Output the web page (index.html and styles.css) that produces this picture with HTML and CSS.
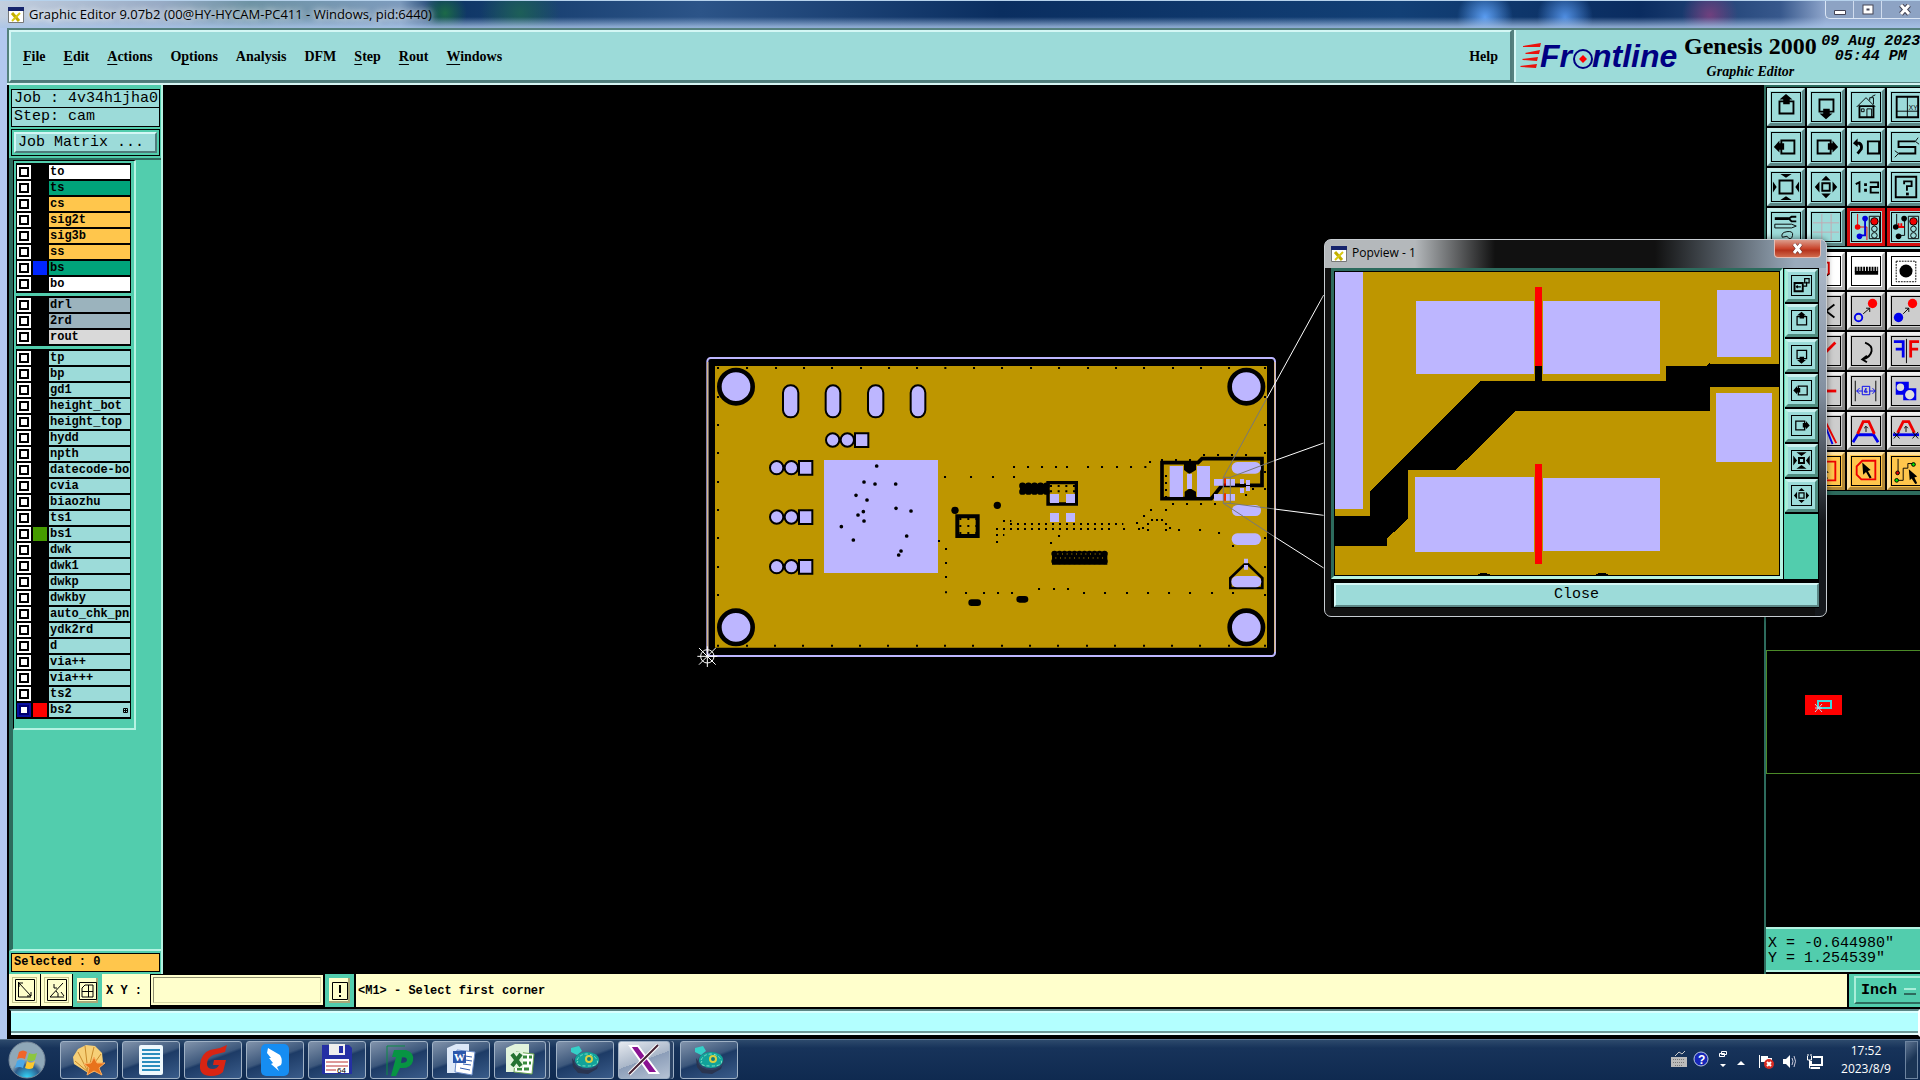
FILE: index.html
```html
<!DOCTYPE html>
<html lang="en">
<head>
<meta charset="utf-8">
<title>Graphic Editor</title>
<link rel="stylesheet" href="styles.css">
</head>
<body>
<svg class="defs" aria-hidden="true">
  <symbol id="x-app" viewBox="0 0 16 16"><path fill="#fff" stroke="#777" d="M.5.5h15v15H.5z"/><path fill="#16246c" d="M0 0h16v4H0z"/><path fill="none" stroke="#c3ae00" stroke-width="3" d="M4 6l7 8"/><path fill="none" stroke="#d8c810" stroke-width="2" d="M12 6l-8 8"/></symbol>
  <symbol id="up" viewBox="0 0 30 30"><path fill="none" stroke="#000" stroke-width="2" d="M8 9h15v13H8z"/><path d="M15 1l7 6h-3v5h-7V7H8z"/></symbol>
  <symbol id="down" viewBox="0 0 30 30"><path fill="none" stroke="#000" stroke-width="2" d="M8 7h15v13H8z"/><path d="M12 17h7v5h3l-7 6-7-6h4z"/></symbol>
  <symbol id="left" viewBox="0 0 30 30"><path fill="none" stroke="#000" stroke-width="2" d="M10 8h14v14H10z"/><path d="M2 15l6-7v3h5v7H8v3z"/></symbol>
  <symbol id="right" viewBox="0 0 30 30"><path fill="none" stroke="#000" stroke-width="2" d="M6 8h14v14H6z"/><path d="M28 15l-6-7v3h-5v7h5v3z"/></symbol>
  <symbol id="home" viewBox="0 0 30 30"><path fill="none" stroke="#000" d="M5 15L15 5l10 10M19 8V5h4v7M21 4l4-2"/><path fill="none" stroke="#000" stroke-width="2" d="M8 14h15v12H8z"/><path fill="none" stroke="#000" d="M10 17h3v3h-3zM16 26v-9h5v9"/></symbol>
  <symbol id="xy" viewBox="0 0 30 30"><path fill="none" stroke="#000" stroke-width="2" d="M5 4h23v22H5z"/><path fill="none" stroke="#000" d="M16.500 4v22M5 19.500h23"/><text x="18" y="18" font-size="7" font-family="Liberation Sans">XY</text></symbol>
  <symbol id="prev" viewBox="0 0 30 30"><path fill="none" stroke="#000" stroke-width="2" d="M17 9h12v13H17z"/><path fill="none" stroke="#000" stroke-width="3" d="M5 11h3q3 2 2 6l-4 5"/><path d="M1 11l5-5v9z"/></symbol>
  <symbol id="snake" viewBox="0 0 30 30"><path fill="none" stroke="#000" stroke-width="2" d="M25 9H7v6h18v7H7"/><path fill="none" stroke="#000" d="M25 9l3-4m-3 4l4 3M7 22l-4-3m4 3l-4 4"/></symbol>
  <symbol id="out" viewBox="0 0 30 30"><path fill="none" stroke="#000" stroke-width="2" d="M8 8h14v14H8z"/><path d="M15 5l-6-4h12zM15 25l-6 4h12zM5 15L1 9v12zM25 15l4-6v12z"/></symbol>
  <symbol id="shrink" viewBox="0 0 30 30"><path fill="none" stroke="#000" stroke-width="3" d="M11 11h8v8h-8z"/><path d="M15 8L7 2h16zM15 22l-8 6h16zM8 15L2 7v16zM22 15l6-8v16z"/></symbol>
  <symbol id="in" viewBox="0 0 30 30"><path fill="none" stroke="#000" stroke-width="2" d="M11 11h8v8h-8z"/><path d="M15 3l-5 5h10zM15 27l-5-5h10zM3 15l5-6v12zM27 15l-5-6v12z"/></symbol>
  <symbol id="ratio" viewBox="0 0 30 30"><path fill="none" stroke="#000" stroke-width="2" d="M4 12l4-2v11M19 10h9v5h-8v6h9"/><path d="M13 11h3v3h-3zM13 17h3v3h-3z"/></symbol>
  <symbol id="help" viewBox="0 0 30 30"><path fill="none" stroke="#000" stroke-width="2" d="M4 4h22v22H4zM13 12V9h8v5h-5v5"/><path d="M15 21h3v3h-3z"/></symbol>
  <symbol id="tools" viewBox="0 0 30 30"><path fill="none" stroke="#000" stroke-width="3" d="M3 6h15"/><path fill="none" stroke="#000" stroke-width="2" d="M26 4l-5 0-3 2 3 3h5"/><path fill="none" stroke="#000" d="M3 12h18l5 2-5 2H3zM11 26q-2-5 5-6t6 4-4 3l-2-2z"/></symbol>
  <symbol id="grid" viewBox="0 0 30 30"><path fill="none" stroke="#c4a9b2" d="M10.500 1v28M20.500 1v28M1 10.500h28M1 20.500h28"/></symbol>
  <symbol id="lights" viewBox="0 0 30 30"><path fill="none" stroke="#e00" d="M6 1v14h10v14"/><path fill="none" stroke="#00d" stroke-width="2" d="M14 6v18H8"/><circle cx="6" cy="15" r="3" fill="#e00"/><circle cx="14" cy="6" r="3" fill="#00d"/><circle cx="8" cy="25" r="3" fill="#00d"/><path fill="none" stroke="#000" d="M18.500 3.500h11v24h-11z"/><circle cx="24" cy="9" r="4" fill="#e00" stroke="#000"/><circle cx="24" cy="17" r="3" fill="none" stroke="#000"/><circle cx="24" cy="24" r="3" fill="none" stroke="#000"/></symbol>
  <symbol id="lights2" viewBox="0 0 30 30"><path fill="none" stroke="#e00" stroke-width="2" d="M4 15h9M7 11v4m3-4v4"/><path fill="none" stroke="#000" d="M5 1v14M13.500 6v18H7"/><circle cx="4" cy="15" r="3"/><circle cx="13" cy="6" r="3"/><circle cx="7" cy="25" r="3"/><path fill="none" stroke="#000" d="M17.500 3.500h11v24h-11z"/><circle cx="23" cy="9" r="4" fill="#e00" stroke="#000"/><circle cx="23" cy="17" r="3" fill="none" stroke="#000"/><circle cx="23" cy="24" r="3" fill="none" stroke="#000"/></symbol>
  <symbol id="poly" viewBox="0 0 30 30"><path fill="none" stroke="#e00" stroke-width="2" d="M5 6h13v12l-7 4"/><path fill="none" stroke="#000" d="M19 18l-9 7"/></symbol>
  <symbol id="ruler" viewBox="0 0 30 30"><path d="M3 15h25v4H3z"/><path fill="none" stroke="#000" stroke-width="5" stroke-dasharray="2 1" d="M3 13h25"/></symbol>
  <symbol id="pad" viewBox="0 0 30 30"><circle cx="15" cy="15" r="7"/><path fill="none" stroke="#000" stroke-dasharray="2 1" d="M4.500 4.500h21v22h-21z"/></symbol>
  <symbol id="cross" viewBox="0 0 30 30"><path fill="none" stroke="#000" stroke-width="2" d="M24 8l-9 7 9 7"/></symbol>
  <symbol id="copy" viewBox="0 0 30 30"><circle cx="22" cy="7" r="5" fill="red"/><circle cx="7" cy="22" r="4" fill="none" stroke="#00e" stroke-width="2"/><path fill="none" stroke="#000" d="M12 18l7-6m-4 0h4v4"/></symbol>
  <symbol id="move" viewBox="0 0 30 30"><circle cx="22" cy="7" r="5" fill="red"/><circle cx="7" cy="22" r="5" fill="#00e"/><path fill="none" stroke="#000" d="M12 18l6-6m-4 0h4v4"/></symbol>
  <symbol id="slash" viewBox="0 0 30 30"><path fill="none" stroke="#e00" stroke-width="3" d="M25 6L12 19"/></symbol>
  <symbol id="rotate" viewBox="0 0 30 30"><path fill="none" stroke="#000" stroke-width="2" d="M14 6q8 3 7 9t-9 9m4-4l-5 4 5 3"/></symbol>
  <symbol id="mirror" viewBox="0 0 30 30"><path fill="none" stroke="#00e" stroke-width="3" d="M2 5h10v17M4 13h8"/><path fill="none" stroke="#e00" stroke-width="3" d="M29 5h-9v17M20 13h8"/><path stroke="#000" d="M15.500 2v26"/></symbol>
  <symbol id="dash" viewBox="0 0 30 30"><path stroke="#e00" stroke-width="3" d="M8 15h18"/></symbol>
  <symbol id="stretch" viewBox="0 0 30 30"><path fill="none" stroke="#000" d="M3.500 4v22M25.500 4v22"/><path fill="none" stroke="#00e" d="M11 10h8v9h-8zM5 15h6m8 0h6M8 12l-3 3 3 3m14-6l3 3-3 3M17 16h-4l2-4v5"/></symbol>
  <symbol id="blocks" viewBox="0 0 30 30"><path fill="#00e" d="M4 5h14v7h8v13H12v-6H4z"/><circle cx="9" cy="11" r="4" fill="#ddd"/><circle cx="19" cy="19" r="5" fill="#ddd"/></symbol>
  <symbol id="leg" viewBox="0 0 30 30"><path fill="none" stroke="#e00" stroke-width="2" d="M14 4l12 24"/><path fill="none" stroke="#00e" stroke-width="2" d="M12 4l10 25"/></symbol>
  <symbol id="arch" viewBox="0 0 30 30"><path fill="none" stroke="#00e" stroke-width="3" d="M1 27l5-8h17l5 8"/><path fill="none" stroke="#e00" stroke-width="3" d="M6 18l6-13h6l6 13"/><path fill="none" stroke="#000" d="M15 16v-6m-2 2l2-2 2 2"/></symbol>
  <symbol id="arch2" viewBox="0 0 30 30"><path stroke="#00e" stroke-width="3" d="M1 19h28"/><path fill="none" stroke="#e00" stroke-width="3" d="M6 17l6-12h6l6 12"/><path fill="none" stroke="#000" d="M15 16v-6m-2 2l2-2 2 2M2 16l6 7m0-7l-6 7M22 16l6 7m0-7l-6 7"/></symbol>
  <symbol id="boxsel" viewBox="0 0 30 30"><path fill="none" stroke="#e00" stroke-width="2" d="M5 5h20v20H5z"/><path d="M10 8l8 9h-4l3 6-2 1-3-6-2 3z"/></symbol>
  <symbol id="polysel" viewBox="0 0 30 30"><path fill="none" stroke="#e00" stroke-width="2" d="M11 4h14v20H10l-5-5V10z"/><path d="M11 6l9 8-3 1 4 7-2 1-4-7-3 3z"/></symbol>
  <symbol id="netsel" viewBox="0 0 30 30"><path fill="none" stroke="#000" d="M6.500 2v15M6 25h6V12h5V7h5"/><circle cx="6" cy="17" r="2" fill="#d00" stroke="#000"/><circle cx="5" cy="25" r="2" fill="#0d0" stroke="#000"/><circle cx="23" cy="8" r="2" fill="#0d0" stroke="#000"/><path d="M18 13l9 8-3 1 3 6-2 1-4-6-2 2z"/></symbol>
  <symbol id="popout" viewBox="0 0 30 30"><path fill="none" stroke="#000" stroke-width="3" d="M4 11h13v13H4z"/><path fill="none" stroke="#000" stroke-width="2" d="M20 4h7v7h-7zM17 16h6V9M7 17h7m-5-2l-2 2 2 2"/></symbol>
  <symbol id="spool" viewBox="0 0 32 32"><path fill="#2a3550" d="M3 14l6 9 10 3 9-4 3-6-3 9-9 5-10-1-5-6z"/><ellipse cx="18" cy="17" rx="13" ry="9" fill="#2f4468"/><ellipse cx="18" cy="16" rx="12" ry="8" fill="#12a39a"/><path fill="none" stroke="#7fe0c8" stroke-dasharray="3 2" d="M8 16q3-6 10-6t10 6-10 6-9-5"/><circle cx="20" cy="15" r="3" fill="#0c7c80" stroke="#d9d040" stroke-width="2"/><path fill="#35d0c8" d="M2 4l8-2 3 5-5 4-6-3z"/></symbol>
</svg>

<header class="titlebar">
  <svg class="app-icon"><use href="#x-app"/></svg>
  <h1>Graphic Editor 9.07b2 (00@HY-HYCAM-PC411 - Windows, pid:6440)</h1>
  <div class="winctl">
    <button aria-label="Minimize"><svg width="12" height="12"><path fill="#fff" stroke="#445" d="M.5 6.500h11v4H.5z"/></svg></button>
    <button aria-label="Restore"><svg width="12" height="12"><path fill="none" stroke="#445" stroke-width="5" d="M3 3h6v5H3z"/><path fill="none" stroke="#fff" stroke-width="3" d="M3 3h6v5H3z"/></svg></button>
    <button aria-label="Close"><svg width="12" height="12"><path stroke="#445" stroke-width="5" d="M2 1l8 9M10 1l-8 9"/><path stroke="#fff" stroke-width="3" d="M2 1l8 9M10 1l-8 9"/></svg></button>
  </div>
</header>

<div class="window">
  <div class="top">
    <nav class="menubar">
      <a href="#"><u>F</u>ile</a><a href="#"><u>E</u>dit</a><a href="#"><u>A</u>ctions</a><a href="#">O<u>p</u>tions</a><a href="#">Analysis</a><a href="#">DFM</a><a href="#"><u>S</u>tep</a><a href="#"><u>R</u>out</a><a href="#"><u>W</u>indows</a>
      <a class="help" href="#">Help</a>
    </nav>
    <div class="brand">
      <svg class="logo" width="162" height="32" role="img" aria-label="Frontline">
        <path fill="#e8120c" d="M3 4l18-3-1 4-17 0zM5 11l15-3-1 4-13 0zM2 17l16-2-1 4-14-1zM0 24l17-2-1 4-15-1z"/>
        <g fill="#000082" font-family="Liberation Sans" font-weight="bold" font-style="italic"><text x="20" y="25" font-size="32">Fr</text><text x="72" y="25" font-size="32">ntline</text></g>
        <circle cx="63" cy="17" r="9" fill="#9cdbd9" stroke="#000082" stroke-width="2"/><path fill="#f00" d="M63 13l4 4-4 4-4-4z"/>
      </svg>
      <div class="product"><strong>Genesis 2000</strong><em>Graphic Editor</em></div>
      <div class="date">09 Aug 2023<br>05:44 PM</div>
    </div>
  </div>

  <div class="main">
    <aside class="side">
      <div class="job">
        <p>Job : 4v34h1jha0</p>
        <p>Step: cam</p>
        <div class="matrix"><button>Job Matrix ...</button></div>
      </div>
      <div class="well">
        <div class="layers">
          <div class="group">
            <label><input type="checkbox"><i></i><span class="white">to</span></label>
            <label><input type="checkbox"><i></i><span class="green">ts</span></label>
            <label><input type="checkbox"><i></i><span class="amber">cs</span></label>
            <label><input type="checkbox"><i></i><span class="amber">sig2t</span></label>
            <label><input type="checkbox"><i></i><span class="amber">sig3b</span></label>
            <label><input type="checkbox"><i></i><span class="amber">ss</span></label>
            <label><input type="checkbox"><i class="c-blue"></i><span class="green">bs</span></label>
            <label><input type="checkbox"><i></i><span class="white">bo</span></label>
          </div>
          <div class="group">
            <label><input type="checkbox"><i></i><span class="slate">drl</span></label>
            <label><input type="checkbox"><i></i><span class="slate">2rd</span></label>
            <label><input type="checkbox"><i></i><span class="grey">rout</span></label>
          </div>
          <div class="group">
            <label><input type="checkbox"><i></i><span>tp</span></label>
            <label><input type="checkbox"><i></i><span>bp</span></label>
            <label><input type="checkbox"><i></i><span>gd1</span></label>
            <label><input type="checkbox"><i></i><span>height_bot</span></label>
            <label><input type="checkbox"><i></i><span>height_top</span></label>
            <label><input type="checkbox"><i></i><span>hydd</span></label>
            <label><input type="checkbox"><i></i><span>npth</span></label>
            <label><input type="checkbox"><i></i><span>datecode-bo</span></label>
            <label><input type="checkbox"><i></i><span>cvia</span></label>
            <label><input type="checkbox"><i></i><span>biaozhu</span></label>
            <label><input type="checkbox"><i></i><span>ts1</span></label>
            <label><input type="checkbox"><i class="c-green"></i><span>bs1</span></label>
            <label><input type="checkbox"><i></i><span>dwk</span></label>
            <label><input type="checkbox"><i></i><span>dwk1</span></label>
            <label><input type="checkbox"><i></i><span>dwkp</span></label>
            <label><input type="checkbox"><i></i><span>dwkby</span></label>
            <label><input type="checkbox"><i></i><span>auto_chk_pnl</span></label>
            <label><input type="checkbox"><i></i><span>ydk2rd</span></label>
            <label><input type="checkbox"><i></i><span>d</span></label>
            <label><input type="checkbox"><i></i><span>via++</span></label>
            <label><input type="checkbox"><i></i><span>via+++</span></label>
            <label><input type="checkbox"><i></i><span>ts2</span></label>
            <label><input type="checkbox" checked><i class="c-red"></i><span class="current">bs2<svg width="5" height="5"><path fill="none" stroke="#000" d="M.5.5h4v4h-4zM2.500 0v5M0 2.500h5"/></svg></span></label>
          </div>
        </div>
      </div>
      <p class="selected">Selected : 0</p>
    </aside>

    <main class="canvas">
      <svg class="art" role="img" aria-label="Circuit board view">
        <g transform="translate(527 255) scale(.333333)">
          <rect x="52" y="54" width="1703" height="894" rx="10" fill="#000" stroke="#bdb6ff" stroke-width="6"/>
          <path fill="none" stroke="#d5b88a" stroke-width="4" d="M53 66v870M1754 66v870"/>
          <path fill="#be9600" d="M75 78h1656v845H75z"/>
          <g fill="#bdb6ff" stroke="#000" stroke-width="14"><circle cx="138" cy="140" r="50"/><circle cx="138" cy="862" r="50"/><circle cx="1669" cy="140" r="50"/><circle cx="1669" cy="862" r="50"/></g>
          <g fill="#bdb6ff" stroke="#000" stroke-width="6">
            <rect x="279" y="136" width="46" height="96" rx="22"/><rect x="407" y="136" width="44" height="96" rx="22"/><rect x="534" y="136" width="46" height="96" rx="22"/><rect x="662" y="136" width="44" height="96" rx="22"/>
            <g id="hdr"><circle cx="428" cy="300" r="20"/><circle cx="472" cy="300" r="20"/><path d="M495 280h40v41h-40z"/></g>
            <use href="#hdr" x="-168" y="83"/><use href="#hdr" x="-168" y="231"/><use href="#hdr" x="-168" y="380"/>
          </g>
          <path fill="#bdb6ff" d="M402 360h342v339H402z"/>
          <path fill="none" stroke="#000" stroke-width="11" stroke-linecap="round" d="M560 378h.1M522 426h.1M555 432h.1M617 432h.1M498 466h.1M531 480h.1M618 505h.1M663 513h.1M520 515h.1M504 525h.1M522 543h.1M454 560h.1M490 600h.1M650 588h.1M633 633h.1M626 645h.1"/>
          <path fill="none" stroke="#000" stroke-width="6" stroke-linecap="square" d="M84 84h.1M171 84h.1M258 84h.1M342 84h.1M426 84h.1M513 84h.1M597 84h.1M681 84h.1M766 84h.1M852 84h.1M936 84h.1M1023 84h.1M1107 84h.1M1194 84h.1M1278 84h.1M1362 84h.1M1449 84h.1M1533 84h.1M1617 84h.1M1725 84h.1M84 917h.1M171 917h.1M255 917h.1M339 917h.1M426 917h.1M510 917h.1M594 917h.1M681 917h.1M765 917h.1M849 917h.1M936 917h.1M1020 917h.1M1104 917h.1M1191 917h.1M1275 917h.1M1362 917h.1M1446 917h.1M1530 917h.1M1617 917h.1M1725 917h.1M84 171h.1M84 255h.1M84 339h.1M84 426h.1M84 510h.1M84 594h.1M84 681h.1M84 765h.1M1725 171h.1M1725 255h.1M1725 339h.1M1725 396h.1M1725 447h.1M1725 594h.1M1725 681h.1M1725 765h.1M765 411h.1M843 411h.1M909 411h.1M972 411h.1M972 381h.1M1014 381h.1M1056 381h.1M1098 381h.1M1131 381h.1M1194 381h.1M1236 381h.1M1281 381h.1M1323 381h.1M1366 381h.1M1380 366h.1M747 603h.1M768 627h.1M768 669h.1M768 711h.1M768 757h.1M828 759h.1M882 759h.1M924 759h.1M966 759h.1M1047 747h.1M1092 747h.1M1134 747h.1M1182 759h.1M1245 759h.1M1311 759h.1M1374 759h.1M1437 759h.1M1500 759h.1M1566 759h.1M1629 759h.1"/>
          <circle cx="795" cy="511" r="11"/><circle cx="922" cy="496" r="11"/>
          <path fill="none" stroke="#000" stroke-width="12" d="M802 529h61v59h-61z"/>
          <path fill="none" stroke="#000" stroke-width="6" stroke-dasharray="6 18" d="M808 537h52M808 558h52M808 579h52"/>
          <g fill="none" stroke="#000" stroke-width="20" stroke-linecap="round"><path d="M845 788h18M989 778h16"/></g>
          <g transform="translate(810 0)">
            <path fill="none" stroke="#000" stroke-width="19" stroke-linecap="round" stroke-dasharray="1 17" d="M187 437h80M187 455h80"/><path d="M180 440h80v14h-80z"/>
            <path fill="none" stroke="#000" stroke-width="10" d="M264 428h85v64h-85z"/><path fill="none" stroke="#000" stroke-width="6" stroke-dasharray="6 17" d="M270 438h76M270 454h76"/>
            <path fill="#bdb6ff" d="M270 462h27v27h-27zM318 462h27v27h-27zM270 519h27v27h-27zM318 519h27v27h-27z"/>
            <path fill="none" stroke="#000" stroke-width="6" stroke-dasharray="6 15" d="M129 543h25M150 552h340M108 567h350M108 585h25"/>
            <path fill="none" stroke="#000" stroke-width="6" stroke-linecap="square" d="M111 606h.1M273 609h.1M297 588h.1M492 567h.1M531 549h.1M552 528h.1M573 510h.1M618 510h.1M537 567h.1M549 564h.1M564 552h.1M564 570h.1M576 540h.1M591 540h.1M606 540h.1M618 552h.1M618 570h.1M630 564h.1M657 570h.1M720 570h.1M777 579h.1M819 618h.1M606 360h.1M648 360h.1M690 360h.1M732 345h.1M774 345h.1M816 345h.1M858 345h.1M618 408h.1M618 429h.1M618 450h.1M618 471h.1M639 492h.1M681 492h.1M723 492h.1M765 492h.1M858 465h.1M879 447h.1"/>
            <path fill="none" stroke="#000" stroke-width="18" stroke-linecap="round" stroke-dasharray="1 14" d="M283 641h160M283 664h160"/><path d="M276 636h166v38H276z"/><path fill="none" stroke="#be9600" stroke-width="3" stroke-dasharray="3 11" d="M286 654h150M292 642h140"/>
            <path fill="none" stroke="#000" stroke-width="11" d="M606 368h108l12-12h180v80H786l-32 40H606z"/>
            <path d="M672 370h36v20l-20 12-16-12zM674 455l16-10 18 10v24h-34z"/>
            <path fill="#bdb6ff" d="M629 378h40v93h-40zM711 378h39v93h-39zM681 401h15v46h-15zM762 417h28v20h-28zM798 417h27v20h-27zM762 462h28v20h-28zM798 462h27v20h-27zM840 417h12v15h-12zM858 420h12v15h-12zM840 444h12v15h-12zM858 438h12v15h-12z"/>
            <path d="M811 744V714l43-41h10l43 41v30z" fill="#be9600" stroke="#000" stroke-width="8"/>
            <g fill="#bdb6ff"><rect x="815" y="366" width="88" height="35" rx="17"/><rect x="816" y="495" width="87" height="33" rx="16"/><rect x="815" y="580" width="88" height="35" rx="17"/><rect x="814" y="708" width="90" height="34" rx="17"/><path d="M852 656h12v14h-12zM852 675h12v14h-12z"/></g>
            <path fill="red" d="M793 415h4v22h-4zM793 460h4v22h-4z"/>
            <g fill="none" stroke="#777" stroke-width="3"><path d="M790 412h21v78h-21zM790 412L921 174M811 412L943 362M811 490l132 17M790 490L943 590"/></g>
            <g fill="none" stroke="#fff" stroke-width="3"><path d="M921 174L1091-135M943 362l148-53M943 507l148 19M943 590l148 94"/></g>
          </g>
          <g fill="none" stroke="#fff" stroke-width="3"><circle cx="52" cy="949" r="20"/><path d="M22 949h60M52 919v62M27 924l50 50M77 924l-50 50"/></g>
        </g>
      </svg>
    </main>

    <aside class="tools">
      <div class="pad teal">
        <button aria-label="Pan up"><svg><use href="#up"/></svg></button><button aria-label="Pan down"><svg><use href="#down"/></svg></button><button aria-label="Home"><svg><use href="#home"/></svg></button><button aria-label="Coordinates"><svg><use href="#xy"/></svg></button>
        <button aria-label="Pan left"><svg><use href="#left"/></svg></button><button aria-label="Pan right"><svg><use href="#right"/></svg></button><button aria-label="Previous view"><svg><use href="#prev"/></svg></button><button aria-label="Serpentine"><svg><use href="#snake"/></svg></button>
        <button aria-label="Zoom in"><svg><use href="#out"/></svg></button><button aria-label="Zoom out"><svg><use href="#in"/></svg></button><button aria-label="Scale"><svg><use href="#ratio"/></svg></button><button aria-label="Query"><svg><use href="#help"/></svg></button>
        <button aria-label="Tools"><svg><use href="#tools"/></svg></button><button aria-label="Grid"><svg><use href="#grid"/></svg></button><button class="red" aria-label="Net check"><svg><use href="#lights"/></svg></button><button class="red" aria-label="Rule check"><svg><use href="#lights2"/></svg></button>
      </div>
      <div class="pad silver">
        <button class="lit" aria-label="Select"><svg></svg></button><button class="lit" aria-label="Polygon"><svg><use href="#poly"/></svg></button><button class="lit" aria-label="Measure"><svg><use href="#ruler"/></svg></button><button class="lit" aria-label="Pad"><svg><use href="#pad"/></svg></button>
        <button aria-label="Add"><svg></svg></button><button aria-label="Delete"><svg><use href="#cross"/></svg></button><button aria-label="Copy"><svg><use href="#copy"/></svg></button><button aria-label="Move"><svg><use href="#move"/></svg></button>
        <button aria-label="Change"><svg></svg></button><button aria-label="Cut"><svg><use href="#slash"/></svg></button><button aria-label="Rotate"><svg><use href="#rotate"/></svg></button><button aria-label="Mirror"><svg><use href="#mirror"/></svg></button>
        <button aria-label="Line"><svg></svg></button><button aria-label="Break"><svg><use href="#dash"/></svg></button><button aria-label="Stretch"><svg><use href="#stretch"/></svg></button><button aria-label="Merge"><svg><use href="#blocks"/></svg></button>
        <button aria-label="Corner"><svg></svg></button><button aria-label="Slope"><svg><use href="#leg"/></svg></button><button aria-label="Shift segment"><svg><use href="#arch"/></svg></button><button aria-label="Trim segment"><svg><use href="#arch2"/></svg></button>
        <button class="gold" aria-label="Pick"><svg></svg></button><button class="gold" aria-label="Box pick"><svg><use href="#boxsel"/></svg></button><button class="gold" aria-label="Polygon pick"><svg><use href="#polysel"/></svg></button><button class="gold" aria-label="Net pick"><svg><use href="#netsel"/></svg></button>
      </div>
      <div class="overview"><svg width="37" height="20"><path fill="red" d="M0 0h37v20H0z"/><path fill="none" stroke="#40d8dc" stroke-width="2" d="M13 6h13v7H13z"/><path fill="none" stroke="#bde" d="M10 9l7 8M17 9l-7 8M10 13h7"/></svg></div>
      <output class="coords">X = -0.644980"<br>Y = 1.254539"</output>
    </aside>
  </div>

  <div class="prompt">
    <button class="snap" aria-label="Snap"><svg width="20" height="22"><path fill="none" stroke="#000" d="M.5.5h19v21H.5zM3.500 3v15H16M4 4l12 13M4 8V4h4M16 13v4h-4"/></svg></button>
    <button class="snap" aria-label="Angle"><svg width="20" height="22"><path fill="none" stroke="#000" d="M.5.5h19v21H.5zM3 18h14M3 18L16 4M7 5v4h3M14 13l3 4M9 12q3 2 2 6"/></svg></button>
    <button class="frame" aria-label="Grid snap"><svg width="18" height="18"><path fill="none" stroke="#000" d="M.5.5h17v17H.5zM3 6l3-3h8v12H3zM9.500 3v12M3 9.500h11"/></svg></button>
    <label class="xy" for="xy-in">X Y :</label><input id="xy-in" type="text">
    <button class="frame" aria-label="Alert"><svg width="16" height="18"><path fill="none" stroke="#000" d="M.5.5h15v17H.5z"/><path d="M7 3h2v8H7zM7 13h2v2H7z"/></svg></button>
    <p>&lt;M1&gt; - Select first corner</p>
    <div class="unit"><select aria-label="Units"><option>Inch</option></select></div>
  </div>
  <div class="message"></div>
</div>

<section class="popview">
  <div class="pop-title"><svg class="app-icon"><use href="#x-app"/></svg><h2>Popview - 1</h2><button aria-label="Close popview"><svg width="12" height="12"><path stroke="#522" stroke-width="4" d="M2 1l7 9M9 1l-7 9"/><path stroke="#fff" stroke-width="3" d="M2 1l7 9M9 1l-7 9"/></svg></button></div>
  <div class="pop-body">
    <div class="pop-main">
      <div class="pop-view"><svg viewBox="38 125 1165 913" preserveAspectRatio="none" shape-rendering="crispEdges" role="img" aria-label="Enlarged view">
        <path fill="#be9600" d="M38 125h1165v913H38z"/>
        <path d="M38 860h92v-73L421 453h141v-47h18v47h327v-45h106l10-11v5h180v69h-181v72H512L355 722H230v146l-55 60v22H38zM410 1038q19-12 37 0zM719 1038q19-14 39 0z"/>
        <path fill="#bdb6ff" d="M38 125h74v714H38zM251 212h309v219H251zM583 212h308v219H583zM1040 180h141v200h-141zM1037 491h147v207h-147zM248 743h312v225H248zM583 746h308v219H583z"/>
        <path fill="red" d="M562 170h18v237h-18zM562 705h18v299h-18z"/>
      </svg></div>
      <div class="pop-tools">
        <button aria-label="Pop out"><svg><use href="#popout"/></svg></button><button aria-label="Up"><svg><use href="#up"/></svg></button><button aria-label="Down"><svg><use href="#down"/></svg></button><button aria-label="Left"><svg><use href="#left"/></svg></button><button aria-label="Right"><svg><use href="#right"/></svg></button><button aria-label="Shrink"><svg><use href="#shrink"/></svg></button><button aria-label="Grow"><svg><use href="#in"/></svg></button>
      </div>
    </div>
    <button class="close">Close</button>
  </div>
</section>

<footer class="taskbar">
  <button class="orb" aria-label="Start"><svg viewBox="0 0 38 38"><defs><radialGradient id="g" cy="1"><stop stop-color="#3df" offset="0"/><stop stop-color="#2c5c8c" offset=".7"/><stop stop-color="#8fa8b8" offset="1"/></radialGradient></defs><circle cx="19" cy="19" r="18" fill="url(#g)" stroke="#789"/><path fill="#f0652a" d="M11 11q4-3 8 0l-2 7q-4-2-8 0z"/><path fill="#8cc63f" d="M21 12q4 2 8 0l-2 7q-4 2-8 0z"/><path fill="#4aa8e8" d="M9 20q4-3 8 0l-2 7q-4-2-8 0z"/><path fill="#fdc82f" d="M19 20q4 3 8 0l-2 7q-4 2-8 0z"/></svg></button>
  <div class="tasks">
    <button aria-label="Shell"><svg viewBox="0 0 32 32"><path fill="#f6cf77" d="M15 29L1 20 0 13l5-8 8-4 9 1 7 7 1 9-9 10z"/><path fill="none" stroke="#c98a2c" d="M15 28L2 17M15 28L5 8M15 28L12 2M15 28L21 3M15 28L28 10"/><path fill="#e8731c" stroke="#fbb060" d="M21 13l3 6 8 0-6 5 3 7-8-4-7 4 2-7-5-4 7-1z"/></svg></button>
    <button aria-label="Notes"><svg viewBox="0 0 32 32"><rect x="4" y="1" width="24" height="30" rx="2" fill="#eef8fd"/><path stroke="#2b8dbd" stroke-width="2" d="M7 6h18M7 10h18M7 14h18M7 18h18M7 22h18M7 26h18"/></svg></button>
    <button aria-label="G app"><svg viewBox="0 0 32 32"><path fill="#d92413" d="M30 1l-2 7-12 3q-6 3-6 9 0 5 6 5 4 0 6-4h-6l1-5h12l-3 12q-4 4-12 4-12 0-11-11Q4 9 13 6l10-2z"/></svg></button>
    <button aria-label="Wing"><svg viewBox="0 0 32 32"><rect x="2" y="0" width="28" height="32" rx="5" fill="#168df2"/><path fill="#fff" d="M9 4l12 7q3 5 1 10l-4 2 2 4-8-7 2-1-4-5 2 0-4-5z"/></svg></button>
    <button aria-label="Save 64"><svg viewBox="0 0 32 32"><path fill="#2530a4" d="M1 1h27l3 3v26H1z"/><path fill="#eee" d="M8 0h16v11H8z"/><path fill="#2530a4" d="M18 2h4v7h-4z"/><path fill="#fff" d="M4 15h24v14H4z"/><path stroke="#b33" stroke-width="1" d="M5 18h22M5 22h22M5 26h10"/><text x="16" y="29" font-size="8" font-family="Liberation Sans">64</text></svg></button>
    <button aria-label="P app"><svg viewBox="0 0 32 32"><path fill="none" stroke="#0a8c45" d="M4 31V2h18"/><path fill="#079443" d="M11 6h12q9 3 7 11-2 8-13 7l-4 8H8l5-19h6l-1 6q6 0 6-3t-5-3H9z"/></svg></button>
    <button aria-label="Word"><svg viewBox="0 0 32 32"><path fill="#dce8f8" d="M2 4l9-4h13v29H2z"/><path fill="#fff" stroke="#6b8cc8" d="M12 6l18 2-3 23-17-3z"/><path stroke="#345eb0" d="M20 12l7 1M20 16l7 1M18 20l8 1M15 24l10 2"/><path fill="#2b57ab" d="M8 7h13v12H8z"/><text x="9" y="17" font-size="11" font-weight="bold" fill="#fff" font-family="Liberation Serif">W</text></svg></button>
    <button class="stack" aria-label="Excel"><svg viewBox="0 0 32 32"><path fill="#e2f4dc" d="M2 4l9-4h14v28H2z"/><path fill="#fff" stroke="#6aa650" d="M12 8l18 2-2 20-18-2z"/><path stroke="#388b3c" stroke-width="3" d="M18 13h10M18 19h9M13 25h13" stroke-dasharray="5 2"/><path fill="#e2f4dc" d="M5 8h14v16H5z"/><path stroke="#257331" stroke-width="4" d="M8 10l9 12M17 10L8 22"/></svg></button>
    <button aria-label="Genesis"><svg><use href="#spool"/></svg></button>
    <button class="stack active" aria-label="X server"><svg viewBox="0 0 32 32"><path fill="#8a1292" stroke="#fff" stroke-width="2" d="M2 2h8l20 27h-9z"/><path fill="none" stroke="#fff" stroke-width="4" d="M30 1L1 30"/><path fill="none" stroke="#423" stroke-width="2" d="M30 1L1 30"/></svg></button>
    <button aria-label="Genesis second"><svg><use href="#spool"/></svg></button>
  </div>
  <div class="tray">
    <svg width="150" height="24" role="img" aria-label="Notification icons">
      <path fill="none" stroke="#ccc" d="M4 8l4-4 3 2 3-3"/><path fill="#bbb" d="M0 9h16v10H0z"/><path stroke="#777" stroke-dasharray="1 1" d="M2 11.500h12M2 14.500h12M4 17.500h8"/>
      <circle cx="30" cy="11" r="7" fill="#1727b8" stroke="#b8c6e0" stroke-width="1"/><text x="27" y="16" font-size="12" font-weight="bold" fill="#fff" font-family="Liberation Sans">?</text>
      <path fill="none" stroke="#fff" d="M50.500 3.500h5v3h-5zM48.500 5.500h5v3h-5z"/><path fill="#fff" d="M49 16h6l-3 3zM66 17l4-4 4 4z"/>
      <path fill="#fff" d="M88 7h1v13h-1zM90 8h7v2h4v6h-4v-2h-7z"/><circle cx="98" cy="16" r="5" fill="#d92b22"/><path stroke="#fff" stroke-width="2" d="M96 14l4 4M100 14l-4 4"/>
      <path fill="#fff" d="M112 11h3l4-4v13l-4-4h-3z"/><path fill="none" stroke="#ccd" d="M121 10q2 3 0 7M123 8q3 5 0 11"/>
      <path fill="none" stroke="#fff" stroke-width="2" d="M142 9h9v8h-11v-4M140 20h9"/><path fill="none" stroke="#fff" d="M136.500 8v4h4V8M138.500 12v8h6M137 6v2m3-2v2"/>
    </svg>
    <time>17:52<br>2023/8/9</time>
    <button class="peek" aria-label="Show desktop"></button>
  </div>
</footer>
</body>
</html>
```
FILE: styles.css
```css
* { box-sizing: border-box; margin: 0; }
:root { --teal: #9cdbd9; --green: #52cdad; --dark: #2d6b5d; --lite: #b5f3e2; --cream: #ffffcc; }
body { display: flex; flex-direction: column; min-height: 100vh; height: 100vh; overflow: hidden; background: #000; color: #000; font: 15px "Liberation Mono", monospace; position: relative; }
button { font: inherit; color: inherit; padding: 0; border: 0; background: none; flex: none; }
svg { display: block; flex: none; }
a { color: inherit; text-decoration: none; }
.defs { width: 0; height: 0; position: absolute; }
.app-icon { width: 16px; height: 16px; }

.titlebar { flex: none; height: 28px; display: flex; align-items: flex-start; gap: 5px; padding-left: 8px; border-top: 1px solid #b6d2ec;
  background: linear-gradient(#0000 16px, #a9c4e8cc 26px), radial-gradient(circle at 1485px 16px, #5a9cf0, #0000 28px), radial-gradient(circle at 1565px 16px, #4f8de0, #0000 28px), radial-gradient(circle at 1710px 14px, #70407e, #0000 28px), radial-gradient(circle at 445px 12px, #1c6a48, #0000 22px), radial-gradient(circle at 520px 12px, #1d5f58, #0000 40px), linear-gradient(90deg, #c3cfdf, #98abc5 160px, #6e93a4 250px, #7d9bbd 400px, #0d3464 440px, #2c5488 700px, #0a2e60 1000px, #124076 1400px, #0a2c60 1640px, #37588c 1780px, #8fa6cc 1826px); }
.app-icon + h1 { flex: 1; }
.titlebar .app-icon { margin-top: 6px; }
h1, h2 { font: 13px/18px "Open Sans", sans-serif; white-space: nowrap; }
h1 { margin-top: 4px; text-shadow: 0 0 6px #fff, 0 0 8px #ffffffaa; }
.winctl { display: flex; height: 18px; border: 1px solid #dbe6f5; border-top: 0; border-right: 0; border-radius: 0 0 0 5px; background: #8da3c4; }
.winctl button { width: 28px; display: grid; place-items: center; border-right: 1px solid #d0dcee; }
.winctl button:last-child { width: 38px; padding-left: 8px; border: 0; }

.window { flex: 1; min-height: 0; display: flex; flex-direction: column; border-left: 7px solid #b2c8f0; background: #000; }
.top { flex: none; height: 57px; display: flex; gap: 2px; padding: 2px 0 1px 2px; background: #55817f; border-bottom: 2px solid #d4f4f2; font-family: "Liberation Serif", serif; overflow: hidden; }
.menubar { flex: 1; display: flex; align-items: center; gap: 18px; padding: 1px 12px 0; background: var(--teal); border: 2px solid; border-color: #d4f7f5 #4f7c7b #4f7c7b #d4f7f5; font-weight: bold; font-size: 14px; }
.menubar u { text-underline-offset: 3px; }
.help { margin-left: auto; }
.brand { width: 406px; display: flex; gap: 2px; padding-left: 4px; background: var(--teal); border-left: 2px solid #d4f7f5; overflow: hidden; }
.logo { margin-top: 12px; overflow: visible; }
.product { width: 136px; display: flex; flex-direction: column; align-items: center; white-space: nowrap; }
.product strong { font-size: 24px; line-height: 32px; }
.product em { font-size: 14px; font-weight: bold; line-height: 20px; }
.date { font: italic bold 15px/15px "Liberation Mono", monospace; width: 104px; flex: none; text-align: center; padding-top: 4px; }

.main { flex: 1; min-height: 0; display: flex; padding-left: 2px; }
.side { width: 154px; flex: none; display: flex; flex-direction: column; background: var(--green); border-right: 2px solid var(--lite); }
.job { padding: 4px 1px 2px 2px; border-bottom: 2px solid var(--dark); }
.job p { height: 19px; line-height: 18px; padding-left: 2px; border: 1px solid #000; background: var(--teal); white-space: nowrap; }
.job p + p { border-top: 0; }
.matrix { margin-top: 2px; padding: 2px; border: 1px solid #000; }
.matrix button, .unit select { display: block; border: 2px solid; border-color: #d4f7f5 #4f7c7b #4f7c7b #d4f7f5; }
.matrix button { width: 100%; height: 21px; text-align: left; padding-left: 2px; background: var(--teal); line-height: 17px; }
.well { flex: 1; border-left: 4px solid var(--dark); border-bottom: 2px solid var(--lite); }
.layers { width: 123px; padding: 2px 3px 9px 2px; border: 1px solid #000; border-right: 2px solid var(--lite); border-bottom: 2px solid var(--lite); display: flex; flex-direction: column; gap: 3px; font: bold 12px/14px "Liberation Mono", monospace; }
.group { background: #000; padding: 1px; }
.group label { display: flex; height: 16px; padding: 1px 0; gap: 2px; }
.group input { appearance: none; margin: 0; width: 14px; height: 14px; border: 2px solid #fff; background: #fff; box-shadow: inset 0 0 0 2px #000; flex: none; }
.group input:checked { border-color: #0a10a0; box-shadow: inset 0 0 0 2px #000070; }
.group i { width: 14px; flex: none; }
.group span { flex: 1; min-width: 0; padding-left: 1px; background: var(--teal); overflow: hidden; white-space: nowrap; }
.group .white { background: #fff; } .group .green { background: #00a47a; } .group .amber { background: #ffc64c; } .group .slate { background: #9bb3bd; } .group .grey { background: #d9d9d9; }
.group .c-blue { background: #0026ff; } .group .c-green { background: #469c00; } .group .c-red { background: red; }
.group .current { display: flex; justify-content: space-between; align-items: center; padding-right: 2px; }
.selected { margin: 2px 1px 2px 2px; padding-left: 2px; height: 19px; border: 1px solid #000; background: #ffc64c; font: bold 12px/17px "Liberation Mono", monospace; }
.canvas { flex: 1; min-width: 0; overflow: hidden; }
.art { width: 100%; height: 100%; overflow: visible; }

.tools { width: 156px; flex: none; display: flex; flex-direction: column; border-left: 2px solid var(--dark); overflow: hidden; }
.pad { display: grid; grid-template-columns: repeat(4, 38px); gap: 2px; padding: 3px 0 0 1px; }
.pad.teal { background: linear-gradient(var(--dark) 2px, #000 2px); border-bottom: 2px solid var(--teal); margin-bottom: 1px; padding-bottom: 1px; }
.pad.silver { padding-top: 2px; padding-bottom: 1px; border-bottom: 4px solid var(--dark); }
.pad button { width: 38px; height: 38px; padding: 1px; border: 3px solid; border-color: #c9f1ef #5c8786 #5c8786 #c9f1ef; background: var(--teal); }
.pad.silver button { background: #cdcdcd; border-color: #eee #888 #888 #eee; }
.pad.silver .lit { background: #fff; border-color: #fff #b0b0b0 #b0b0b0 #fff; }
.pad.silver .gold { background: #ffc64c; border-color: #ffe2a0 #b08838 #b08838 #ffe2a0; }
.pad svg { width: 30px; height: 30px; border: 1px solid #000; }
.pad .red { border-color: #d41010; }
.overview { height: 124px; margin-top: auto; padding: 44px 0 0 38px; border: 1px solid #4b8a28; border-right: 0; margin-bottom: 153px; }
.coords { height: 45px; flex: none; margin-bottom: 2px; padding: 7px 2px 0; border-top: 2px solid var(--lite); border-bottom: 2px solid var(--lite); background: var(--green); line-height: 15px; white-space: nowrap; }

.prompt { flex: none; height: 33px; display: flex; align-items: stretch; margin-left: 2px; background: #000; font: bold 12px/16px "Liberation Mono", monospace; overflow: hidden; }
.prompt > p, .xy { display: flex; align-items: center; background: var(--cream); }
.prompt > p { flex: 1; padding-left: 2px; margin-left: 2px; }
.xy { width: 48px; padding-left: 4px; }
.snap { width: 31px; margin: 0 1px 1px 0; background: var(--cream); display: grid; place-items: center; box-shadow: inset 0 0 0 3px var(--cream), inset 0 0 0 4px #c4c48e; }
.frame { width: 29px; background: var(--cream); display: grid; place-items: center; border: 4px solid var(--green); box-shadow: inset -2px -2px #a8a878; }
.prompt input { width: 170px; border: 2px solid; border-color: #8f8f70 #d8d8a8 #d8d8a8 #8f8f70; outline: 2px solid var(--cream); outline-offset: -1px; margin: 2px 3px 3px 2px; background: var(--cream); padding: 0 4px; }
.unit { width: 71px; margin-left: 2px; padding: 2px 0 1px 5px; background: var(--green); }
.unit select { appearance: none; width: 84px; height: 28px; padding: 0 5px; font: bold 15px "Liberation Mono", monospace; color: #000; border-color: #a9eed9 #2d6b5d #2d6b5d #a9eed9; border-radius: 0; background: linear-gradient(#a9eed9 2px, #52cdad 2px 5px, #2d6b5d 5px) 48px 10px / 12px 7px no-repeat var(--green); }
.message { flex: none; height: 28px; margin: 2px 0 2px 2px; background: #b3ffff; border: 2px solid; border-color: #5c8786 #fff #000 #000; box-shadow: inset 0 2px #d8ffff, inset 0 -2px #e6ffff, inset 0 -4px #6d9997; }

.popview { position: absolute; left: 1324px; top: 239px; width: 503px; padding: 0 7px 8px 6px; border: 1px solid #c8cdd2; border-radius: 7px; box-shadow: 0 0 6px #0008; background: linear-gradient(90deg, #b4b8bb, #b4b8bb 90px, #0000 170px) 0 0 / 100% 28px no-repeat, linear-gradient(90deg, #0000 330px, #9ab 470px) 0 0 / 100% 28px no-repeat, linear-gradient(90deg, #111 490px, #0000 490px), linear-gradient(#b4c0d0, #8390a0 40%, #15181c 75%); }
.pop-title { height: 28px; display: flex; align-items: flex-start; gap: 5px; }
.pop-title .app-icon { margin-top: 6px; }
.pop-title h2 { margin-top: 4px; flex: 1; font-size: 12px; }
.pop-title button { width: 47px; height: 18px; margin-right: -2px; display: grid; place-items: center; border: 1px solid #e6bdb4; border-top: 0; border-radius: 0 0 4px 4px; background: linear-gradient(#dc9c8b, #c9452c 50%, #b5331c 60%, #d06a4c); }
.pop-body { background: #000; padding-bottom: 1px; }
.pop-main { display: flex; }
.pop-view { flex: 1; border: 3px solid; border-color: var(--dark) var(--lite) var(--lite) var(--dark); }
.pop-view svg { width: 100%; height: 305px; border: 1px solid #000; }
.pop-tools { width: 36px; padding: 0 1px; background: #52cdad; border: 1px solid #000; border-bottom: 0; }
.pop-tools button { display: block; width: 33px; height: 33px; padding: 3px; margin-bottom: 2px; border: 3px solid; border-color: #c9f1ef #4f8c80 #4f8c80 #a9eed9; background: var(--teal); box-shadow: 0 2px #000; }
.pop-tools svg { width: 21px; height: 21px; border: 1px solid #000; }
.close { display: block; width: 485px; height: 24px; margin: 4px 0 0 3px; background: var(--teal); border: 2px solid; border-color: #d4f7f5 #5c8786 #5c8786 #d4f7f5; line-height: 20px; }

.taskbar { flex: none; height: 41px; display: flex; align-items: center; border-top: 1px solid #5b7693; background: linear-gradient(#2d4a6c, #17335a 20%, #0f2a50); }
.orb { width: 38px; margin: 0 14px 0 8px; }
.orb svg { width: 38px; height: 38px; }
.tasks { display: flex; gap: 4px; flex: 1; }
.tasks button { width: 58px; height: 38px; display: grid; place-items: center; border: 1px solid #9fb1c5; border-radius: 3px; background: linear-gradient(160deg, #8193ab, #3d587c 45%, #1d3b66 50%, #3a5c8a); }
.tasks svg { width: 32px; height: 32px; }
.tasks .stack { width: 52px; margin-right: 6px; box-shadow: 3px 0 #2b4467, 4px 0 #9fb1c5; }
.tasks .active { background: linear-gradient(160deg, #e6eaf0, #a9b6c8 50%, #8b9db8 50%, #b5c2d4); }
.tray { display: flex; align-items: center; }
.tray svg { overflow: visible; margin-right: 12px; }
time { width: 66px; text-align: center; color: #fff; font: 12px/18px "Open Sans", sans-serif; }
.peek { width: 13px; height: 38px; margin: 0 2px 0 6px; border: 1px solid #6d84a0; background: linear-gradient(135deg, #5d7390, #1b3556 50%); }
```
